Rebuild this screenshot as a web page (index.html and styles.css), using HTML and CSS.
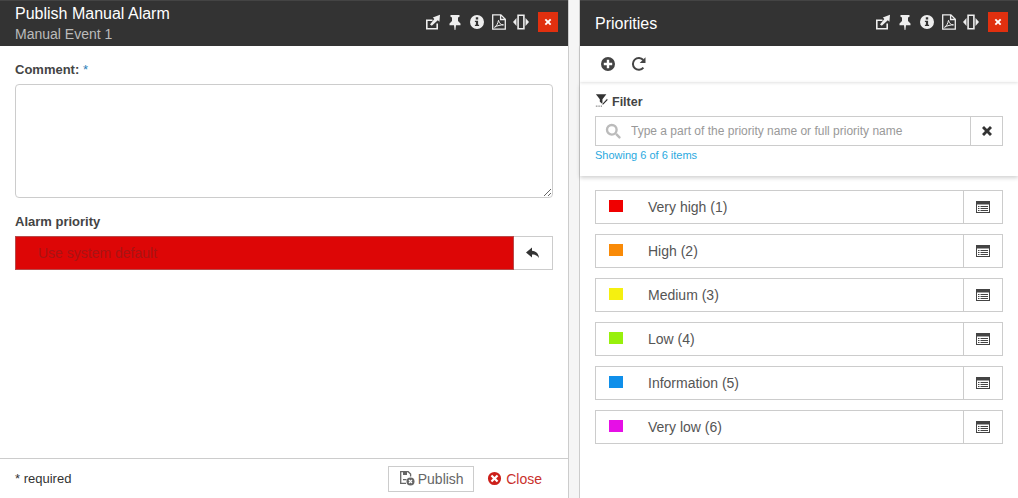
FILE: index.html
```html
<!DOCTYPE html>
<html lang="en">
<head>
    <meta charset="UTF-8">
    <title>Publish Manual Alarm</title>
    <link rel="stylesheet" href="styles.css">
</head>
<body>
    <svg class="sprite" width="0" height="0">
        <symbol id="i-popout" viewBox="0 0 16 16">
            <path d="M1 5.500h6.500v1.500H2.600v7h8.800V9.500H13V15.500H1z" fill="currentColor"/>
            <path d="M5 10.500 9.300 5 7.800 3.500 15 .8l-.6 7-1.600-1.500-6 5.500z" fill="currentColor"/>
        </symbol>
        <symbol id="i-pin" viewBox="0 0 16 16">
            <path d="M3.500 1h9v1.800l-1.500.7V7l2.500 2.600V11.200H9l-.6 4.800H7.600L7 11.200H2.500V9.600L5 7V3.500l-1.500-.7z" fill="currentColor"/>
        </symbol>
        <symbol id="i-info" viewBox="0 0 16 16">
            <path fill-rule="evenodd" d="M8 1a7 7 0 1 1 0 14A7 7 0 0 1 8 1zM6.800 3.300v2.300h2.400V3.300zM5.900 6.800V8h1v2.700h-1V12h4.200v-1.300h-1V6.800z" fill="currentColor"/>
        </symbol>
        <symbol id="i-pdf" viewBox="0 0 16 16">
            <path fill="none" stroke="currentColor" stroke-width="1.300" d="M1.700.8h8.200l4.400 4.400v10H1.700zM9.600.8v4.700h4.700"/>
            <path fill="none" stroke="currentColor" stroke-width="1" d="M3.500 13.300c1.800-.9 3.500-4 4-7 .5 2.700 2.300 4.600 5 4.600-2.800 0-6.200.6-9 2.400z"/>
        </symbol>
        <symbol id="i-resize" viewBox="0 0 16 16">
            <path fill-rule="evenodd" d="M4.300 .5h7.400v15H4.300zM5.900 2v12h4.200V2z" fill="currentColor"/>
            <path d="M3.500 4v8L0 8zM12.500 4v8L16 8z" fill="currentColor"/>
        </symbol>
        <symbol id="i-times" viewBox="0 0 12 12">
            <path d="M3 1 6 4l3-3 2 2-3 3 3 3-2 2-3-3-3 3-2-2 3-3-3-3z" fill="currentColor"/>
        </symbol>
        <symbol id="i-plus" viewBox="0 0 16 16">
            <path fill-rule="evenodd" d="M8 1a7 7 0 1 1 0 14A7 7 0 0 1 8 1zM6.800 3.800v3h-3v2.400h3v3h2.400v-3h3V6.800h-3v-3z" fill="currentColor"/>
        </symbol>
        <symbol id="i-refresh" viewBox="0 0 16 16">
            <path fill="none" stroke="currentColor" stroke-width="2" d="M12.400 11.600A5.900 5.900 0 1 1 12.300 4"/>
            <path d="M14.500 1.200V7H8.700z" fill="currentColor"/>
        </symbol>
        <symbol id="i-filter" viewBox="0 0 16 16">
            <path d="M1 1.500h12L8.500 7v5.500L5.500 10V7z" fill="currentColor"/>
            <path d="M8.500 12 13.500 6.500l1.500 1.300-5.200 5.400-1.800.4z" fill="currentColor" stroke="#fff" stroke-width=".6"/>
            <path d="M1 15h8" stroke="currentColor" stroke-width="1" stroke-dasharray="1 1"/>
        </symbol>
        <symbol id="i-search" viewBox="0 0 16 16">
            <path fill="none" stroke="currentColor" stroke-width="2.400" d="M6.800 2a4.800 4.800 0 1 1 0 9.600 4.800 4.800 0 0 1 0-9.600z"/>
            <path d="M10.200 11.800l1.700-1.700 3.400 3.400a1.200 1.200 0 0 1-1.700 1.700z" fill="currentColor"/>
        </symbol>
        <symbol id="i-details" viewBox="0 0 16 14">
            <path fill-rule="evenodd" d="M1 1h14v12H1zM2 4.500V12h12V4.500z" fill="currentColor"/>
            <path d="M3 6h1.500v1H3zM5.500 6H13v1H5.500zM3 8h1.500v1H3zM5.500 8H13v1H5.500zM3 10h1.500v1H3zM5.500 10H13v1H5.500z" fill="currentColor"/>
        </symbol>
        <symbol id="i-reply" viewBox="0 0 16 16">
            <path d="M7 2.500 1 7.500l6 5V9.400c3 0 5 .8 7 3.600-.4-4.500-3-7-7-7.200z" fill="currentColor"/>
        </symbol>
        <symbol id="i-save" viewBox="0 0 16 16">
            <path fill="none" stroke="currentColor" stroke-width="1.300" d="M7 13.400H1.700V1.700h7.500l2.400 2.400v2.400"/>
            <path d="M4 2h4v3H4zM4 9h3.500v1.300H4z" fill="currentColor"/>
            <circle cx="11.500" cy="11.500" r="4" fill="currentColor"/>
            <path d="M10 10l3 3M13 10l-3 3" stroke="#fff" stroke-width="1.200"/>
        </symbol>
        <symbol id="i-close-circle" viewBox="0 0 16 16">
            <path fill-rule="evenodd" d="M8 1a7 7 0 1 1 0 14A7 7 0 0 1 8 1zM5.600 3.900 3.900 5.600 6.300 8l-2.400 2.400 1.700 1.700L8 9.700l2.400 2.400 1.700-1.700L9.700 8l2.400-2.400-1.700-1.700L8 6.300z" fill="currentColor"/>
        </symbol>
    </svg>

    <div class="panel panel-left">
        <div class="panel-header">
            <div class="titles">
                <div class="title">Publish Manual Alarm</div>
                <div class="subtitle">Manual Event 1</div>
            </div>
            <div class="header-tools">
                <svg class="tool"><use href="#i-popout"/></svg>
                <svg class="tool"><use href="#i-pin"/></svg>
                <svg class="tool"><use href="#i-info"/></svg>
                <svg class="tool"><use href="#i-pdf"/></svg>
                <svg class="tool"><use href="#i-resize"/></svg>
                <button class="close-x"><svg><use href="#i-times"/></svg></button>
            </div>
        </div>
        <div class="form-body">
            <label class="field-label" for="comment">Comment: <span class="star">*</span></label>
            <textarea id="comment" class="comment-box"></textarea>
            <div class="field-label priority-label">Alarm priority</div>
            <div class="priority-picker">
                <div class="priority-value">Use system default</div>
                <button class="picker-btn"><svg><use href="#i-reply"/></svg></button>
            </div>
        </div>
        <div class="panel-footer">
            <span class="required">* required</span>
            <button class="btn-publish"><svg><use href="#i-save"/></svg>Publish</button>
            <button class="btn-close"><svg><use href="#i-close-circle"/></svg>Close</button>
        </div>
    </div>

    <div class="panel panel-right">
        <div class="panel-header">
            <div class="titles">
                <div class="title title-big">Priorities</div>
            </div>
            <div class="header-tools">
                <svg class="tool"><use href="#i-popout"/></svg>
                <svg class="tool"><use href="#i-pin"/></svg>
                <svg class="tool"><use href="#i-info"/></svg>
                <svg class="tool"><use href="#i-pdf"/></svg>
                <svg class="tool"><use href="#i-resize"/></svg>
                <button class="close-x"><svg><use href="#i-times"/></svg></button>
            </div>
        </div>
        <div class="toolbar">
            <svg class="toolbar-icon"><use href="#i-plus"/></svg>
            <svg class="toolbar-icon"><use href="#i-refresh"/></svg>
        </div>
        <div class="filter">
            <div class="filter-title"><svg><use href="#i-filter"/></svg>Filter</div>
            <div class="search-row">
                <div class="search-box">
                    <svg><use href="#i-search"/></svg>
                    <input type="text" placeholder="Type a part of the priority name or full priority name">
                </div>
                <button class="search-clear"><svg><use href="#i-times"/></svg></button>
            </div>
            <div class="showing">Showing 6 of 6 items</div>
        </div>
        <div class="priority-list">
            <div class="priority-row">
                <span class="swatch red"></span><span class="priority-name">Very high (1)</span>
                <button class="row-btn"><svg><use href="#i-details"/></svg></button>
            </div>
            <div class="priority-row">
                <span class="swatch orange"></span><span class="priority-name">High (2)</span>
                <button class="row-btn"><svg><use href="#i-details"/></svg></button>
            </div>
            <div class="priority-row">
                <span class="swatch yellow"></span><span class="priority-name">Medium (3)</span>
                <button class="row-btn"><svg><use href="#i-details"/></svg></button>
            </div>
            <div class="priority-row">
                <span class="swatch green"></span><span class="priority-name">Low (4)</span>
                <button class="row-btn"><svg><use href="#i-details"/></svg></button>
            </div>
            <div class="priority-row">
                <span class="swatch blue"></span><span class="priority-name">Information (5)</span>
                <button class="row-btn"><svg><use href="#i-details"/></svg></button>
            </div>
            <div class="priority-row">
                <span class="swatch magenta"></span><span class="priority-name">Very low (6)</span>
                <button class="row-btn"><svg><use href="#i-details"/></svg></button>
            </div>
        </div>
    </div>
</body>
</html>
```

FILE: styles.css
```css
* {
    box-sizing: border-box;
}

html, body {
    height: 100%;
}

body {
    margin: 0;
    display: flex;
    justify-content: space-between;
    overflow: hidden;
    font-family: "Liberation Sans", Arial, sans-serif;
    font-size: 14px;
    color: #555;
    background-color: #f5f5f5;
}

.sprite {
    display: none;
}

button {
    font-family: inherit;
    padding: 0;
    cursor: pointer;
}

.panel {
    height: 498px;
    display: flex;
    flex-direction: column;
    background-color: #fff;
}

.panel-left {
    width: 569px;
    border-right: 1px solid #ccc;
}

.panel-right {
    width: 439px;
    border-left: 1px solid #ccc;
}

.panel-header {
    height: 46px;
    flex-shrink: 0;
    display: flex;
    justify-content: space-between;
    padding: 0 10px 0 15px;
    background-color: #333;
    border-top: 1px solid #444;
}

.title {
    font-size: 16px;
    line-height: 20px;
    margin-top: 3px;
    color: #fff;
}

.title-big {
    margin-top: 13px;
}

.subtitle {
    font-size: 14px;
    line-height: 18px;
    margin-top: 1px;
    color: #bbb;
}

.header-tools {
    display: flex;
    align-items: center;
    gap: 6px;
    padding-bottom: 3px;
}

.tool {
    width: 16px;
    height: 16px;
    color: #eee;
}

.close-x {
    width: 20px;
    height: 20px;
    margin-left: 3px;
    border: none;
    display: flex;
    align-items: center;
    justify-content: center;
    background-color: #e1300f;
    color: #fff;
}

.close-x svg {
    width: 8px;
    height: 8px;
}

.form-body {
    flex: 1;
    padding: 15px 15px 0;
}

.field-label {
    display: block;
    font-weight: bold;
    font-size: 13px;
    line-height: 17px;
    color: #444;
}

.star {
    color: #2a7fb8;
    font-weight: normal;
}

.comment-box {
    display: block;
    width: 100%;
    height: 114px;
    margin-top: 6px;
    border: 1px solid #ccc;
    border-radius: 4px;
    background-color: #fff;
}

.priority-label {
    margin-top: 15px;
}

.priority-picker {
    display: flex;
    height: 34px;
    margin-top: 6px;
}

.priority-value {
    flex: 1;
    padding-left: 22px;
    line-height: 32px;
    font-size: 14px;
    color: #a81414;
    background-color: #dd0606;
    border: 1px solid #b84a4a;
}

.picker-btn {
    width: 39px;
    border: 1px solid #ccc;
    border-left: none;
    background-color: #fff;
    color: #333;
    display: flex;
    align-items: center;
    justify-content: center;
}

.picker-btn svg {
    width: 16px;
    height: 16px;
}

.panel-footer {
    height: 40px;
    flex-shrink: 0;
    display: flex;
    align-items: center;
    padding: 0 26px 0 15px;
    border-top: 1px solid #ccc;
}

.required {
    flex: 1;
    font-size: 13px;
    color: #333;
}

.btn-publish {
    width: 86px;
    height: 26px;
    display: flex;
    align-items: center;
    justify-content: center;
    gap: 3px;
    font-size: 14px;
    color: #666;
    background-color: #fff;
    border: 1px solid #ccc;
}

.btn-publish svg {
    width: 16px;
    height: 16px;
    color: #666;
    margin-top: -2px;
}

.btn-close {
    height: 26px;
    margin-left: 13px;
    display: flex;
    align-items: center;
    gap: 4px;
    font-size: 14px;
    color: #c9302c;
    background: none;
    border: none;
}

.btn-close svg {
    width: 15px;
    height: 15px;
    color: #cc1f1a;
}

.toolbar {
    height: 36px;
    flex-shrink: 0;
    display: flex;
    align-items: center;
    gap: 15px;
    padding: 0 0 0 20px;
    box-shadow: 0 1px 3px rgba(0, 0, 0, 0.12);
}

.toolbar-icon {
    width: 16px;
    height: 16px;
    color: #444;
}

.filter {
    height: 94px;
    flex-shrink: 0;
    padding: 11px 15px 0;
    box-shadow: 0 2px 4px rgba(0, 0, 0, 0.18);
}

.filter-title {
    display: flex;
    align-items: center;
    gap: 3px;
    height: 17px;
    font-size: 12.500px;
    font-weight: bold;
    color: #444;
}

.filter-title svg {
    width: 14px;
    height: 14px;
    color: #333;
    margin-top: -3px;
}

.search-row {
    display: flex;
    height: 30px;
    margin-top: 6px;
}

.search-box {
    flex: 1;
    display: flex;
    align-items: center;
    padding-left: 9px;
    border: 1px solid #ccc;
}

.search-box svg {
    width: 16px;
    height: 16px;
    color: #bbb;
}

.search-box input {
    flex: 1;
    margin-left: 10px;
    border: none;
    outline: none;
    padding: 0;
    font-family: inherit;
    font-size: 12px;
}

.search-box input::placeholder {
    color: #999;
    opacity: 1;
}

.search-clear {
    width: 32px;
    border: 1px solid #ccc;
    border-left: none;
    background-color: #fff;
    color: #333;
    display: flex;
    align-items: center;
    justify-content: center;
}

.search-clear svg {
    width: 12px;
    height: 12px;
}

.showing {
    margin-top: 3px;
    font-size: 11px;
    line-height: 13px;
    color: #2aa9e0;
}

.priority-list {
    display: flex;
    flex-direction: column;
    gap: 10px;
    padding: 14px 15px 0;
}

.priority-row {
    height: 34px;
    display: flex;
    align-items: center;
    border: 1px solid #ccc;
    padding-left: 13px;
}

.swatch {
    width: 14px;
    height: 12px;
    margin-top: -2px;
}

.red { background-color: #f00000; }
.orange { background-color: #f98a07; }
.yellow { background-color: #f5f010; }
.green { background-color: #98f00c; }
.blue { background-color: #0f8fea; }
.magenta { background-color: #e60fe6; }

.priority-name {
    flex: 1;
    margin-left: 25px;
    color: #555;
}

.row-btn {
    width: 39px;
    height: 100%;
    border: none;
    border-left: 1px solid #ccc;
    background-color: #fff;
    color: #444;
    display: flex;
    align-items: center;
    justify-content: center;
}

.row-btn svg {
    width: 16px;
    height: 14px;
}
```
